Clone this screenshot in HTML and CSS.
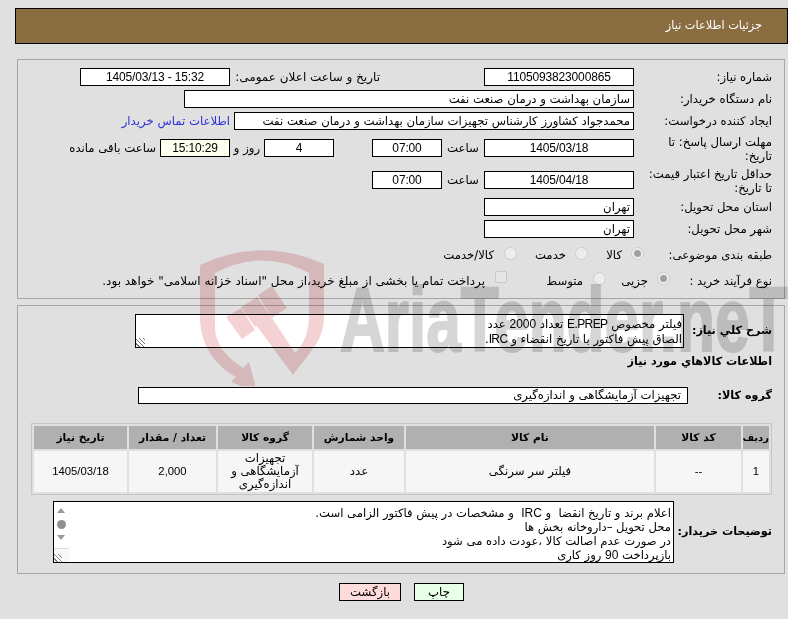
FILE: index.html
```html
<!DOCTYPE html>
<html lang="fa" dir="rtl">
<head>
<meta charset="utf-8">
<title>جزئیات اطلاعات نیاز</title>
<link rel="stylesheet" href="styles.css">
</head>
<body>
<div class="watermark" aria-hidden="true">
  <svg class="shield" viewBox="190 245 145 141" width="145" height="141">
    <path d="M200 265 Q262 236 324 264 V317 C324 340 310 352 293 375 L256 325 L272 318 L295 353 C304 345 309 330 309 317 V273 Q262 248 215 273 V327 C215 345 228 358 243 368 L249 362 L257 392 L231 382 L236 377 C215 365 200 345 200 317 Z" fill="#f4d2d4"/>
    <path d="M226 317 L241 308 L255 330 L242 339 Z M241 307 L257 297 L272 318 L255 327 Z M258 295 L272 286 L287 308 L272 318 Z" fill="#f4d2d4"/>
  </svg>
  <span class="wm-text">AriaTender.neT</span>
</div>

<header class="title-bar"><h1>جزئیات اطلاعات نیاز</h1></header>

<section class="panel top-panel">
  <div class="row r-18">
    <label class="lbl">شماره نیاز:</label>
    <div class="box w150 center num">1105093823000865</div>
    <label class="public-label">تاریخ و ساعت اعلان عمومی:</label>
    <div class="box w150 center num" dir="ltr">1405/03/13 - 15:32</div>
  </div>
  <div class="row r-18">
    <label class="lbl">نام دستگاه خریدار:</label>
    <div class="box w450">سازمان بهداشت و درمان صنعت نفت</div>
  </div>
  <div class="row r-18">
    <label class="lbl">ایجاد کننده درخواست:</label>
    <div class="box w400">محمدجواد کشاورز کارشناس تجهیزات سازمان بهداشت و درمان صنعت نفت</div>
    <a class="contact">اطلاعات تماس خریدار</a>
  </div>
  <div class="row r-deadline">
    <label class="lbl two">مهلت ارسال پاسخ: تا تاریخ:</label>
    <div class="box w150 center num">1405/03/18</div>
    <span class="word w-saat">ساعت</span>
    <div class="box w70 center num">07:00</div>
    <div class="box w70 center num days">4</div>
    <span class="word w-rooz">روز و</span>
    <div class="box w70 center num remain">15:10:29</div>
    <span class="word w-left">ساعت باقی مانده</span>
  </div>
  <div class="row r-deadline validity">
    <label class="lbl two">حداقل تاریخ اعتبار قیمت: تا تاریخ:</label>
    <div class="box w150 center num">1405/04/18</div>
    <span class="word w-saat">ساعت</span>
    <div class="box w70 center num">07:00</div>
  </div>
  <div class="row r-18 province">
    <label class="lbl">استان محل تحویل:</label>
    <div class="box w150">تهران</div>
  </div>
  <div class="row r-18">
    <label class="lbl">شهر محل تحویل:</label>
    <div class="box w150">تهران</div>
  </div>
  <div class="row choices cat">
    <label class="lbl">طبقه بندی موضوعی:</label>
    <span class="opt o1"><i class="radio on"></i>کالا</span>
    <span class="opt o2"><i class="radio"></i>خدمت</span>
    <span class="opt o3"><i class="radio"></i>کالا/خدمت</span>
  </div>
  <div class="row choices proc">
    <label class="lbl">نوع فرآیند خرید :</label>
    <span class="opt p1"><i class="radio on"></i>جزیی</span>
    <span class="opt p2"><i class="radio"></i>متوسط</span>
    <span class="opt p3"><i class="check"></i>پرداخت تمام یا بخشی از مبلغ خرید،از محل "اسناد خزانه اسلامی" خواهد بود.</span>
  </div>
</section>

<section class="panel bottom-panel">
  <div class="row summary">
    <label class="lbl bold">شرح کلي نیاز:</label>
    <div class="area need">فیلتر مخصوص <span class="lat">E.PREP</span> تعداد <span class="lat">2000</span> عدد<br>الصاق پیش فاکتور با تاریخ انقضاء و <span class="lat">IRC</span>.<i class="grip"></i></div>
  </div>
  <h2>اطلاعات کالاهاي مورد نیاز</h2>
  <div class="row group">
    <label class="lbl bold">گروه کالا:</label>
    <div class="box group-box">تجهیزات آزمایشگاهی و اندازه‌گیری</div>
  </div>
  <table>
    <thead>
      <tr><th class="c1">ردیف</th><th class="c2">کد کالا</th><th class="c3">نام کالا</th><th class="c4">واحد شمارش</th><th class="c5">گروه کالا</th><th class="c6">تعداد / مقدار</th><th class="c7">تاریخ نیاز</th></tr>
    </thead>
    <tbody>
      <tr><td class="lat">1</td><td class="lat">--</td><td>فیلتر سر سرنگی</td><td>عدد</td><td class="wrap">تجهیزات آزمایشگاهی و اندازه‌گیری</td><td class="lat">2,000</td><td class="lat">1405/03/18</td></tr>
    </tbody>
  </table>
  <div class="row notes">
    <label class="lbl bold">توضیحات خریدار:</label>
    <div class="area note">اعلام برند و تاریخ انقضا &nbsp;و <span class="lat">IRC</span> &nbsp;و مشخصات در پیش فاکتور الزامی است.<br>محل تحویل –داروخانه بخش ها<br>در صورت عدم اصالت کالا ،عودت داده می شود<br>بازپرداخت <span class="lat">90</span> روز کاری
      <div class="scroll"><i class="up"></i><i class="dot"></i><i class="down"></i><i class="corner"></i></div>
    </div>
  </div>
</section>

<div class="actions">
  <button class="print">چاپ</button>
  <button class="back">بازگشت</button>
</div>
</body>
</html>
```
FILE: styles.css
```css
html, body { margin: 0; padding: 0; background: #e0e0e0; }
body {
  position: relative;
  width: 788px;
  height: 619px;
  overflow: hidden;
  color: #000;
  font-family: "DejaVu Sans", Tahoma, sans-serif;
  font-size: 11.7px;
  line-height: 14px;
}
.title-bar {
  box-sizing: border-box;
  width: 773px;
  height: 36px;
  margin: 8px 0 0 15px;
  background: #8b6d42;
  border: 1px solid #000;
  display: flex;
  align-items: center;
}
.title-bar h1 { margin: 0 25px 0 0; font-size: 11.3px; font-weight: normal; color: #fff; }
.panel {
  box-sizing: border-box;
  margin: 0 3px 0 17px;
  border: 1px solid #a6a6a6;
  position: relative;
}
.top-panel { margin-top: 15px; height: 240px; padding-top: 8px; }
.bottom-panel { margin-top: 6px; height: 269px; padding-top: 8px; }
.row { display: flex; align-items: center; }
.r-18 { height: 18px; margin-bottom: 4px; }
.r-deadline { height: 18px; margin: 9px 0 14px; }
.validity { margin-top: 0; }
.province { margin-top: -5px; }
.lbl {
  box-sizing: border-box;
  width: 150px;
  padding-right: 12px;
  flex: none;
  text-align: right;
  white-space: nowrap;
}
.lbl.two { line-height: 14px; height: 28px; margin-top: 2px; padding-left: 12px; white-space: normal; }
.bold { font-weight: bold; font-size: 11.2px; }
.box {
  box-sizing: border-box;
  height: 18px;
  background: #fff;
  border: 1px solid #000;
  flex: none;
  padding: 0 3px;
  line-height: 16px;
  white-space: nowrap;
  overflow: hidden;
}
.center { text-align: center; }
.num { font-family: "Liberation Sans", Arial, sans-serif; font-size: 12px; letter-spacing: -.15px; }
.lat { font-family: "Liberation Sans", Arial, sans-serif; font-size: 12px; }
.need .lat { letter-spacing: -.6px; }
.w150 { width: 150px; }
.w450 { width: 450px; }
.w400 { width: 400px; }
.w70 { width: 70px; }
.public-label { margin-right: 104px; width: 150px; flex: none; text-align: right; white-space: nowrap; font-size: 12px; }
.contact { color: #3030e0; margin-right: 4px; white-space: nowrap; }
.word { flex: none; text-align: center; }
.w-saat { width: 42px; }
.days { margin-right: 38px; }
.w-rooz { width: 34px; }
.remain { background: #fffff0; }
.w-left { margin-right: 4px; white-space: nowrap; }
.choices { height: 18px; }
.cat { margin: 8px 0; }
.proc { margin-top: 8px; }
.cat .lbl { width: 140px; }
.proc .lbl { width: 114.5px; }
.opt { display: inline-flex; align-items: center; flex: none; white-space: nowrap; box-sizing: border-box; }
.radio {
  width: 13px; height: 13px; border-radius: 50%;
  background: #ededed; border: 1px solid #cdcdcd;
  box-sizing: border-box; flex: none;
  display: block; position: relative; top: -2px;
}
.proc .radio { top: -3px; }
.radio.on::after {
  content: ""; display: block; width: 7px; height: 7px; margin: 2px;
  background: #a0a0a0; border-radius: 50%;
}
.check {
  width: 12px; height: 12px; box-sizing: border-box; border: 1px solid #c8c8c8;
  background: #e6e6e6; border-radius: 2px; flex: none; display: block; position: relative; top: -4px;
}
.o1 { gap: 9px; width: 56.5px; }
.o2 { gap: 8.5px; width: 71px; }
.o3 { gap: 9.5px; }
.p1 { gap: 8.5px; width: 64px; }
.p2 { gap: 9.5px; width: 98.5px; }
.p3 { gap: 10px; font-size: 12px; }
.summary { height: 34px; }
.summary .lbl { width: 100px; }
.area {
  box-sizing: border-box;
  border: 1px solid #000;
  background: #fff;
  position: relative;
  flex: none;
}
.need { width: 549px; height: 34px; padding: 2px 1px 0 0; line-height: 15px; }
.grip {
  position: absolute; left: 0; bottom: 0; width: 9px; height: 9px;
  background: repeating-linear-gradient(45deg, transparent 0 2px, #777 2px 3px);
}
h2 { margin: 7px 12px 0 0; font-size: 11.2px; line-height: 14px; font-weight: bold; }
.group { margin-top: 18px; height: 17px; }
.group .lbl { width: 96px; }
.group-box { width: 550px; height: 17px; line-height: 15px; padding-right: 6px; }
table {
  box-sizing: border-box;
  width: 741px;
  margin: 19px 12px 0 0;
  border: 1px solid #c6c6c6;
  border-spacing: 2px;
  table-layout: fixed;
  height: 71px;
}
th { background: #b0b0b0; height: 23px; padding: 0; font-size: 10.7px; font-weight: bold; white-space: nowrap; }
td { background: #f6f6f6; height: 41px; padding: 0; text-align: center; font-size: 11.7px; line-height: 13px; }
td.lat { font-size: 11.3px; }
td.wrap { padding: 0 6px; }
.c1 { width: 26px; font-size: 10px; } .c2 { width: 85px; } .c3 { width: 248px; } .c4 { width: 90px; }
.c5 { width: 94px; } .c6 { width: 87px; } .c7 { width: 93px; }
.notes { margin-top: 6px; height: 62px; }
.notes .lbl { width: 110px; }
.note { width: 621px; height: 62px; padding: 4px 2px 0 0; line-height: 14px; font-size: 11.6px; }
.scroll { position: absolute; left: 0; top: 0; bottom: 0; width: 15px; background: #fff; }
.scroll i { display: block; position: absolute; }
.up { left: 3px; top: 6px; width: 0; height: 0; border: 4.5px solid transparent; border-bottom: 5px solid #9a9a9a; border-top: 0; }
.dot { left: 3px; top: 18px; width: 9px; height: 9px; background: #8f8f8f; border-radius: 50%; }
.down { left: 3px; top: 33px; width: 0; height: 0; border: 4.5px solid transparent; border-top: 5px solid #9a9a9a; border-bottom: 0; }
.corner {
  left: 0; bottom: 0; width: 15px; height: 14px; border-top: 1px solid #dcdcdc; box-sizing: border-box;
  background: repeating-linear-gradient(45deg, transparent 0 2px, #888 2px 3px) left bottom / 8px 8px no-repeat, #f8f8f8;
}
.actions { display: flex; justify-content: center; gap: 13px; margin-top: 9px; padding-left: 15px; }
button {
  box-sizing: border-box; height: 18px; padding: 0; border: 1px solid #000;
  font: 11.7px/14px "DejaVu Sans", Tahoma, sans-serif; color: #000;
}
.print { width: 50px; background: #e8ffe8; }
.back { width: 62px; background: #ffdcdc; }
.watermark {
  position: absolute; left: 0; top: 0; width: 788px; height: 386px;
  overflow: hidden; pointer-events: none; z-index: 2; direction: ltr;
  mix-blend-mode: multiply;
}
.shield { position: absolute; left: 190px; top: 245px; }
.wm-text {
  position: absolute; left: 340px; top: 275px;
  font: bold 90px/90px "Liberation Sans", Arial, sans-serif;
  color: #d6d6d6;
  -webkit-text-stroke: 2px #d6d6d6;
  transform: scaleX(.69);
  transform-origin: left center;
  white-space: nowrap;
}
```
